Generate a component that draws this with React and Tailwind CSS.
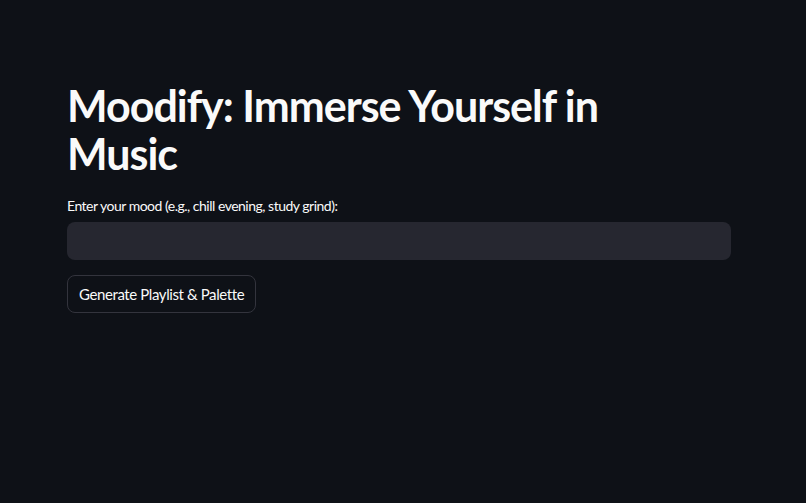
import React from 'react';

const App = () => {
    return (
        <div className="min-h-screen w-full bg-[#0e1117] text-[#fafafa]" style={{ fontFamily: 'Lato, "Noto Sans", sans-serif' }}>
            <div className="pl-[67px] pr-[75px] pt-[82px]">
                <h1 className="text-[43px] font-bold leading-[48px] tracking-[-1px]">
                    Moodify: Immerse Yourself in<br />Music
                </h1>

                <label className="mt-[18px] block text-[14px] leading-5 tracking-[-0.5px]">
                    Enter your mood (e.g., chill evening, study grind):
                </label>
                <input
                    type="text"
                    className="mt-[6px] block h-[38px] w-full rounded-lg bg-[#262730] px-3 text-[15px] text-[#fafafa] outline-none"
                />

                <button className="mt-[15px] h-[38px] rounded-lg border border-[#33343d] bg-[#0e1117] px-[11px] text-[15px] tracking-[-0.4px] text-[#fafafa]">
                    Generate Playlist &amp; Palette
                </button>
            </div>
        </div>
    );
};

export default App;
